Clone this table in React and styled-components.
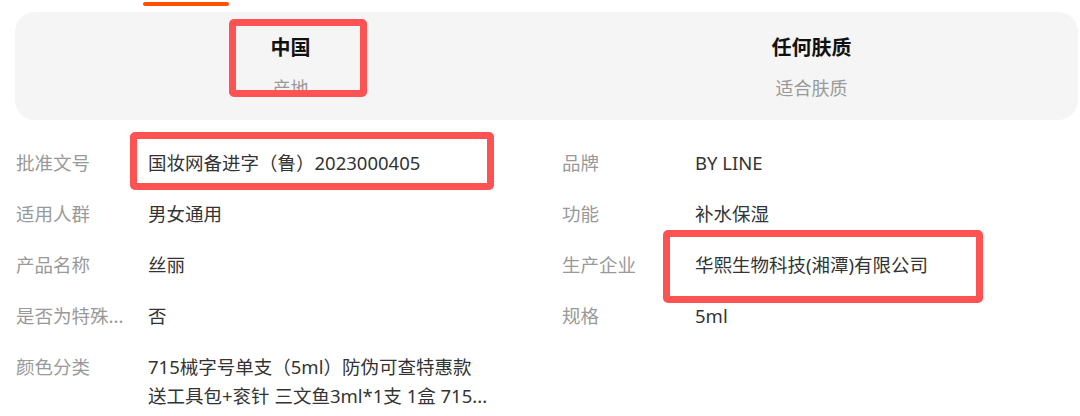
import React from 'react';
import styled, { createGlobalStyle } from 'styled-components';

const GlobalStyle = createGlobalStyle`
  body {
    margin: 0;
    background: #fff;
    font-family: "Noto Sans", "Noto Sans CJK SC", sans-serif;
  }
`;

const Page = styled.div`
  width: 1080px;
  height: 416px;
  overflow: hidden;
  position: relative;
`;

const TabStrip = styled.div`
  height: 12px;
  padding-top: 2px;
  box-sizing: border-box;

  .indicator {
    width: 86px;
    height: 4px;
    margin-left: 143px;
    background: #ff5000;
    border-radius: 2px;
  }
`;

const Summary = styled.div`
  display: grid;
  grid-template-columns: 521px 521px;
  margin-left: 15px;
  width: 1063px;
  height: 108px;
  padding: 22px 0 0 15px;
  box-sizing: border-box;
  background: #f5f5f5;
  border-radius: 20px;
`;

const SummaryItem = styled.div`
  position: relative;
  display: flex;
  flex-direction: column;
  align-items: center;
`;

const SummaryTitle = styled.div`
  font-size: 20px;
  line-height: 28px;
  font-weight: 700;
  color: #111;
`;

const SummarySub = styled.div`
  margin-top: 12px;
  font-size: 18px;
  line-height: 28px;
  color: #999;
`;

const Highlight = styled.div`
  position: absolute;
  left: ${(p) => p.$left}px;
  top: ${(p) => p.$top}px;
  width: ${(p) => p.$width}px;
  height: ${(p) => p.$height}px;
  border: 7px solid #ff5252;
  border-radius: 5px;
  box-sizing: border-box;
  pointer-events: none;
`;

const InfoGrid = styled.div`
  display: grid;
  grid-template-columns: 546px 500px;
  row-gap: 22px;
  margin-top: 27.5px;
  padding-left: 16px;
`;

const InfoRow = styled.div`
  position: relative;
  display: flex;
  font-size: 18.5px;
  line-height: 29px;
`;

const Label = styled.div`
  flex: 0 0 ${(p) => (p.$wide ? 133 : 132)}px;
  color: #999;
  white-space: nowrap;
`;

const Value = styled.div`
  color: #333;
  white-space: nowrap;
`;

const items = [
  { label: '批准文号', value: '国妆网备进字（鲁）2023000405', box: { left: 114, top: -15.5, width: 364, height: 58 } },
  { label: '品牌', value: 'BY LINE', wide: true },
  { label: '适用人群', value: '男女通用' },
  { label: '功能', value: '补水保湿', wide: true },
  { label: '产品名称', value: '丝丽' },
  { label: '生产企业', value: '华熙生物科技(湘潭)有限公司', wide: true, box: { left: 101, top: -20, width: 320, height: 73 } },
  { label: '是否为特殊...', value: '否' },
  { label: '规格', value: '5ml', wide: true },
  {
    label: '颜色分类',
    value: ['715械字号单支（5ml）防伪可查特惠款', '送工具包+衮针 三文鱼3ml*1支 1盒 715...'],
  },
];

export default function App() {
  return (
    <Page>
      <GlobalStyle />
      <TabStrip>
        <div className="indicator" />
      </TabStrip>
      <Summary>
        <SummaryItem>
          <SummaryTitle>中国</SummaryTitle>
          <SummarySub>产地</SummarySub>
          <Highlight $left={199} $top={-15} $width={138} $height={78} />
        </SummaryItem>
        <SummaryItem>
          <SummaryTitle>任何肤质</SummaryTitle>
          <SummarySub>适合肤质</SummarySub>
        </SummaryItem>
      </Summary>
      <InfoGrid>
        {items.map((item) => (
          <InfoRow key={item.label}>
            <Label $wide={item.wide}>{item.label}</Label>
            <Value>
              {Array.isArray(item.value)
                ? item.value.map((line) => <div key={line}>{line}</div>)
                : item.value}
            </Value>
            {item.box && (
              <Highlight
                $left={item.box.left}
                $top={item.box.top}
                $width={item.box.width}
                $height={item.box.height}
              />
            )}
          </InfoRow>
        ))}
      </InfoGrid>
    </Page>
  );
}
